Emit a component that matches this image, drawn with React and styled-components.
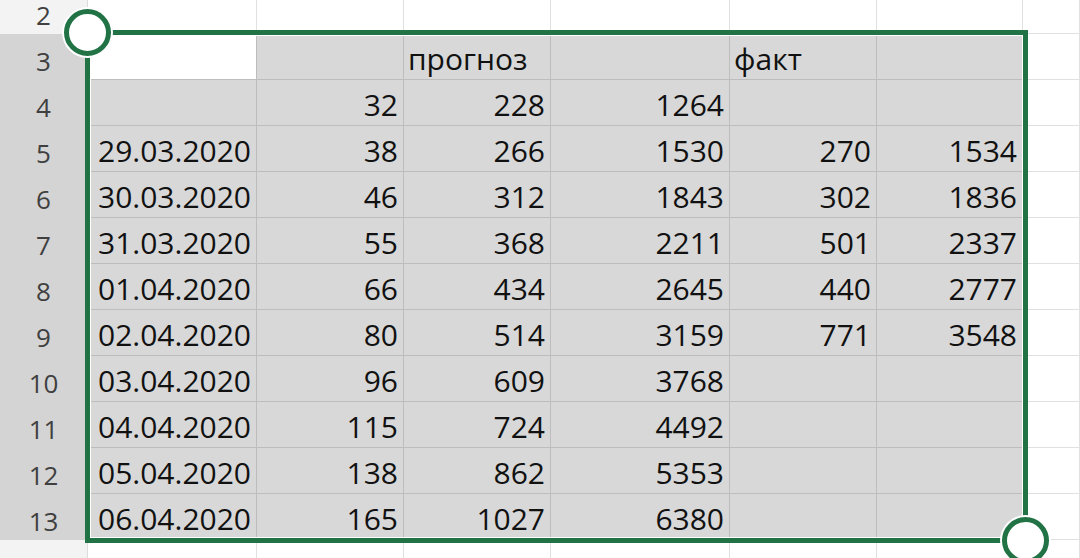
import React from 'react';
import styled, { createGlobalStyle } from 'styled-components';

const GlobalStyle = createGlobalStyle`
  html, body {
    margin: 0;
    padding: 0;
    background: #ffffff;
    overflow: hidden;
  }
  body {
    font-family: "Open Sans", "Noto Sans", sans-serif;
  }
`;

const COLS = '88px 169px 147px 147px 179px 147px 146px 1fr';
const GREEN = '#217346';

const Sheet = styled.div`
  position: relative;
  width: 1080px;
  height: 558px;
  overflow: hidden;
  background: #ffffff;
`;

const Row = styled.div`
  display: grid;
  grid-template-columns: ${COLS};
  height: ${p => p.height}px;
`;

const RowHeader = styled.div`
  display: flex;
  align-items: flex-end;
  justify-content: center;
  box-sizing: border-box;
  padding-bottom: 6px;
  background: ${p => (p.selected ? '#d4d4d4' : '#f3f3f3')};
  border-right: 1px solid ${p => (p.selected ? '#c4c4c4' : '#dcdcdc')};
  color: #404040;
  font-size: 26px;
  line-height: 1;
`;

const Cell = styled.div`
  display: flex;
  align-items: flex-end;
  justify-content: ${p => (p.numeric ? 'flex-end' : 'flex-start')};
  box-sizing: border-box;
  padding: 0 5px 5px ${p => (p.indent ? 10 : 4)}px;
  background: ${p => (p.selected && !p.active ? '#d8d8d8' : '#ffffff')};
  border-right: 1px solid ${p => (p.selected ? '#bdbdbd' : '#e0e0e0')};
  border-bottom: 1px solid ${p => (p.selected ? '#bdbdbd' : '#e0e0e0')};
  color: #111111;
  font-size: 30px;
  line-height: 1;
  white-space: nowrap;
`;

const Selection = styled.div`
  position: absolute;
  left: 85px;
  top: 30px;
  width: 943px;
  height: 513px;
  box-sizing: border-box;
  border: 5px solid ${GREEN};
  box-shadow: inset 0 0 0 1px #ffffff;
  pointer-events: none;
`;

const Handle = styled.div`
  position: absolute;
  width: 37px;
  height: 37px;
  border-radius: 50%;
  background: #ffffff;
  border: 5px solid ${GREEN};
  box-shadow: 0 0 0 2px #ffffff;
  ${p => (p.corner === 'start' ? 'left: -26px; top: -26px;' : 'right: -26px; bottom: -26px;')}
`;

const data = [
  ['', '', 'прогноз', '', 'факт', ''],
  ['', 32, 228, 1264, '', ''],
  ['29.03.2020', 38, 266, 1530, 270, 1534],
  ['30.03.2020', 46, 312, 1843, 302, 1836],
  ['31.03.2020', 55, 368, 2211, 501, 2337],
  ['01.04.2020', 66, 434, 2645, 440, 2777],
  ['02.04.2020', 80, 514, 3159, 771, 3548],
  ['03.04.2020', 96, 609, 3768, '', ''],
  ['04.04.2020', 115, 724, 4492, '', ''],
  ['05.04.2020', 138, 862, 5353, '', ''],
  ['06.04.2020', 165, 1027, 6380, '', ''],
];

const blank = ['', '', '', '', '', '', ''];

const SheetRow = ({ number, values, selected, height }) => (
  <Row height={height}>
    <RowHeader selected={selected}>{number}</RowHeader>
    {values.map((v, i) => (
      <Cell
        key={`c${number}-${i}`}
        selected={selected && i < 6}
        active={selected && number === 3 && i === 0}
        numeric={typeof v === 'number'}
        indent={i === 0}
      >
        {v}
      </Cell>
    ))}
  </Row>
);

export default function App() {
  return (
    <>
      <GlobalStyle />
      <Sheet>
        <SheetRow number={2} values={blank} height={34} />
        {data.map((values, i) => (
          <SheetRow
            key={`r${i}`}
            number={i + 3}
            values={[...values, '']}
            selected
            height={46}
          />
        ))}
        <SheetRow number={14} values={blank} height={46} />
        <Selection>
          <Handle corner="start" />
          <Handle corner="end" />
        </Selection>
      </Sheet>
    </>
  );
}
